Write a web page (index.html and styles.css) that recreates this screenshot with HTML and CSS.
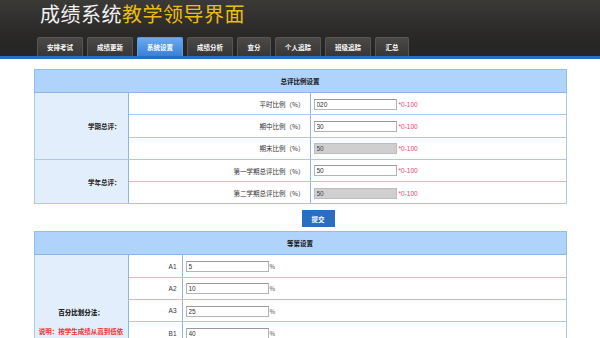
FILE: index.html
```html
<!DOCTYPE html>
<html lang="zh-CN">
<head>
    <meta charset="UTF-8">
    <meta name="viewport" content="width=device-width, initial-scale=1.0">
    <title>成绩系统 教学领导界面</title>
    <link rel="stylesheet" href="styles.css">
</head>
<body>
    <div class="header">
        <h1 class="title">成绩系统<span class="sub">教学领导界面</span></h1>
        <ul class="tabs">
            <li>安排考试</li>
            <li>成绩更新</li>
            <li class="active">系统设置</li>
            <li>成绩分析</li>
            <li class="short">查分</li>
            <li>个人追踪</li>
            <li>班级追踪</li>
            <li class="short">汇总</li>
        </ul>
    </div>

    <div class="main">
        <table class="setting">
            <tr>
                <th colspan="3">总评比例设置</th>
            </tr>
            <tr>
                <td class="group" rowspan="3">学期总评：</td>
                <td class="label">平时比例（%）</td>
                <td class="field"><input type="text" value="020"><span class="hint">*0-100</span></td>
            </tr>
            <tr>
                <td class="label">期中比例（%）</td>
                <td class="field"><input type="text" value="30"><span class="hint">*0-100</span></td>
            </tr>
            <tr>
                <td class="label">期末比例（%）</td>
                <td class="field"><input type="text" value="50" disabled><span class="hint">*0-100</span></td>
            </tr>
            <tr>
                <td class="group" rowspan="2">学年总评：</td>
                <td class="label">第一学期总评比例（%）</td>
                <td class="field"><input type="text" value="50"><span class="hint">*0-100</span></td>
            </tr>
            <tr>
                <td class="label">第二学期总评比例（%）</td>
                <td class="field"><input type="text" value="50" disabled><span class="hint">*0-100</span></td>
            </tr>
        </table>

        <div class="actions">
            <button class="submit">提交</button>
        </div>

        <table class="setting grade">
            <tr>
                <th colspan="3">等第设置</th>
            </tr>
            <tr>
                <td class="group center" rowspan="4">
                    <b>百分比划分法：</b>
                    <p class="note">说明：按学生成绩从高到低依</p>
                </td>
                <td class="label">A1</td>
                <td class="field"><input type="text" value="5"><span class="unit">%</span></td>
            </tr>
            <tr>
                <td class="label">A2</td>
                <td class="field"><input type="text" value="10"><span class="unit">%</span></td>
            </tr>
            <tr>
                <td class="label">A3</td>
                <td class="field"><input type="text" value="25"><span class="unit">%</span></td>
            </tr>
            <tr>
                <td class="label">B1</td>
                <td class="field"><input type="text" value="40"><span class="unit">%</span></td>
            </tr>
        </table>
    </div>
</body>
</html>
```

FILE: styles.css
```css
* {
    margin: 0;
    padding: 0;
    box-sizing: border-box;
}

html, body {
    height: 338px;
    overflow: hidden;
}

body {
    font-family: "Noto Sans CJK SC", "Liberation Sans", sans-serif;
    background: #fff;
    color: #222;
}

.header {
    height: 59px;
    background: linear-gradient(#3c3a37, #2a2928 60%, #252525);
    border-bottom: 3px solid #2a6ec2;
    padding-left: 37px;
    display: flex;
    flex-direction: column;
    justify-content: space-between;
}

.title {
    font-size: 20px;
    font-weight: normal;
    color: #f2f2f2;
    padding-left: 3px;
    line-height: 27px;
    letter-spacing: 0.5px;
}

.title .sub {
    color: #ecbd10;
}

.tabs {
    list-style: none;
    display: flex;
    gap: 4px;
}

.tabs li {
    width: 46px;
    height: 19px;
    line-height: 18px;
    text-align: center;
    font-size: 6.5px;
    font-weight: bold;
    color: #fff;
    background: linear-gradient(#4a4948, #383736);
    border: 1px solid #555;
    border-bottom: none;
    border-radius: 2px 2px 0 0;
}

.tabs li.short {
    width: 34px;
}

.tabs li.active {
    background: linear-gradient(#6aaaf0, #3a80d6);
    border-color: #5a9ae6;
}

.main {
    width: 533px;
    margin: 10px auto 0;
}

.setting {
    width: 100%;
    border-collapse: collapse;
    border: 1px solid #92bdec;
    font-size: 6.5px;
}

.setting th {
    height: 23px;
    background: #afd3fa;
    border-bottom: 1px solid #8cb6e8;
    font-weight: bold;
    color: #111;
}

.setting td {
    height: 22.3px;
    border: 1px solid #a9c9ee;
}

.setting .group {
    width: 94px;
    background: #e2eefb;
    text-align: right;
    padding-right: 7px;
    font-weight: bold;
    border-right: 1px solid #8cb6e8;
}

.setting .label {
    width: 182px;
    text-align: right;
    padding-right: 5px;
    color: #333;
    border-right: 1px solid #8cb6e8;
}

.setting .field {
    padding-left: 3px;
}

.setting input {
    width: 83px;
    height: 11px;
    font-size: 6.5px;
    font-family: "Liberation Sans", sans-serif;
    color: #333;
    padding-left: 2px;
    border: 1px solid #b4b4b4;
    border-top-color: #999;
    background: #fff;
    vertical-align: middle;
}

.setting input:disabled {
    background: #cfcfcf;
    color: #444;
    border-color: #bdbdbd;
}

.hint {
    color: #f0456a;
    font-size: 6.5px;
    font-family: "Liberation Sans", sans-serif;
    margin-left: 2px;
    vertical-align: middle;
}

.actions {
    display: flex;
    justify-content: center;
    padding: 6px 0 4px 36px;
}

.submit {
    width: 33px;
    height: 17px;
    background: #2a6ec2;
    color: #fff;
    border: none;
    font-size: 6.5px;
    font-weight: bold;
    font-family: "Noto Sans CJK SC", sans-serif;
}

.grade .label {
    width: 54px;
    font-family: "Liberation Sans", sans-serif;
}

.grade .group.center {
    text-align: center;
    padding: 52px 0 0;
    vertical-align: top;
}

.note {
    color: #f03030;
    font-weight: bold;
    margin-top: 9px;
}

.unit {
    font-size: 6px;
    color: #444;
    margin-left: 1px;
    vertical-align: middle;
}
```
